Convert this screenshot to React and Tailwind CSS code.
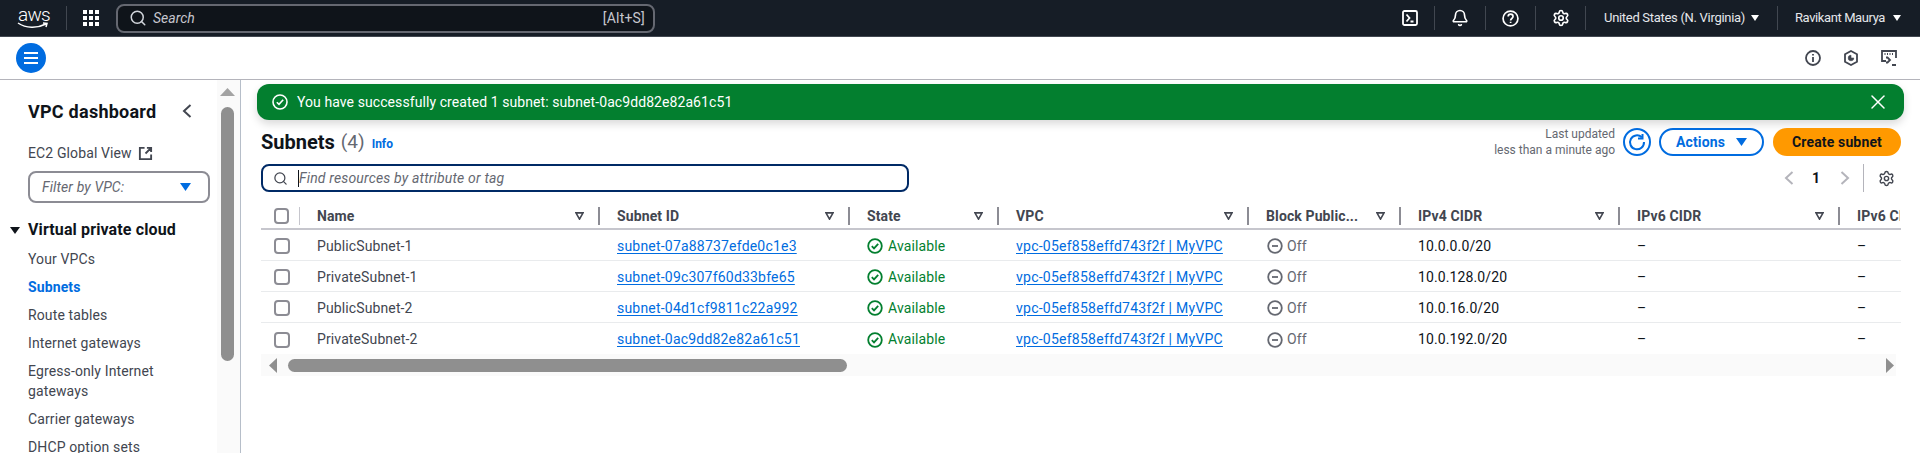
import { Search, Bell, Settings, X } from "lucide-react";

const FONT = "font-['Roboto','Liberation_Sans',sans-serif]";
const COLS = "grid grid-cols-[39px_300px_250px_149px_250px_152px_219px_220px_60px]";

const NAV = ["Your VPCs", "Subnets", "Route tables", "Internet gateways", "Egress-only Internet gateways", "Carrier gateways", "DHCP option sets"];

const ROWS = [
  { name: "PublicSubnet-1", id: "subnet-07a88737efde0c1e3", cidr: "10.0.0.0/20" },
  { name: "PrivateSubnet-1", id: "subnet-09c307f60d33bfe65", cidr: "10.0.128.0/20" },
  { name: "PublicSubnet-2", id: "subnet-04d1cf9811c22a992", cidr: "10.0.16.0/20" },
  { name: "PrivateSubnet-2", id: "subnet-0ac9dd82e82a61c51", cidr: "10.0.192.0/20" },
];

const HEADERS = ["Name", "Subnet ID", "State", "VPC", "Block Public...", "IPv4 CIDR", "IPv6 CIDR", "IPv6 CIDR"];

function Caret({ className }) {
  return (
    <svg viewBox="0 0 10 8" preserveAspectRatio="none" className={className} fill="currentColor">
      <path d="M0 0h10L5 8z" />
    </svg>
  );
}

function Chevron({ dir, className }) {
  return (
    <svg viewBox="0 0 10 14" className={`w-[10px] h-[14px] shrink-0 ${className}`} fill="none" stroke="currentColor" strokeWidth="2">
      <path d={dir === "left" ? "M8.5 1L2 7l6.5 6" : "M1.5 1L8 7l-6.5 6"} />
    </svg>
  );
}

function CheckCircle({ className }) {
  return (
    <svg viewBox="0 0 16 16" className={className} fill="none" stroke="currentColor" strokeWidth="1.8">
      <circle cx="8" cy="8" r="6.8" />
      <path d="M4.8 8.2l2.2 2.2 4.2-4.6" />
    </svg>
  );
}

function TopDivider() {
  return <div className="w-px h-6 bg-[#414750]" />;
}

function Waffle() {
  return (
    <div className="grid grid-cols-3 gap-[2px] w-[16px]">
      {[0, 1, 2, 3, 4, 5, 6, 7, 8].map((i) => (
        <div key={i} className="w-[4px] h-[4px] bg-white" />
      ))}
    </div>
  );
}

function TopBar() {
  return (
    <div className="h-[37px] bg-[#161d26] border-b border-[#414750] flex items-center text-white shrink-0">
      <div className="w-[66px] pl-[17px] flex flex-col items-start">
        <span className="text-[19px] leading-[13px] font-light tracking-[-0.8px] pl-[1px] pb-[1px]">aws</span>
        <svg viewBox="0 0 32 7" className="w-[32px] h-[7px]" fill="none" stroke="currentColor" strokeWidth="1.5">
          <path d="M1 1c8 5.5 19 5.5 28 1M26 1l4 .5-1 3.5" />
        </svg>
      </div>
      <TopDivider />
      <div className="ml-[16px] mr-[17px]">
        <Waffle />
      </div>
      <div className="w-[539px] h-[29px] rounded-lg border-2 border-[#656871] bg-[#0f141a] flex items-center pl-[11px] pr-[8px] text-[#c6c6cd]">
        <Search size={18} strokeWidth={2} className="text-[#d1d5db]" />
        <span className="ml-[6px] italic text-[14px] flex-1">Search</span>
        <span className="text-[14px] tracking-[0.2px]">[Alt+S]</span>
      </div>
      <div className="flex-1" />
      <svg viewBox="0 0 16 16" className="w-[16px] h-[16px]" fill="none" stroke="currentColor" strokeWidth="1.8">
        <rect x="1" y="1" width="14" height="14" rx="1.5" />
        <path d="M4.5 4.5L7.5 8l-3 3.5M8.5 11.5h3" />
      </svg>
      <div className="ml-[16px] mr-[16px]"><TopDivider /></div>
      <Bell size={18} strokeWidth={2.2} />
      <div className="ml-[16px] mr-[16px]"><TopDivider /></div>
      <svg viewBox="0 0 16 16" className="w-[17px] h-[17px]" fill="none" stroke="currentColor" strokeWidth="1.6">
        <circle cx="8" cy="8" r="7" />
        <path d="M5.8 6.2c0-3 4.6-3 4.6 0 0 1.8-2.3 1.8-2.3 3.6M8.1 11v1.2" />
      </svg>
      <div className="ml-[16px] mr-[16px]"><TopDivider /></div>
      <Settings size={18} strokeWidth={2.2} />
      <div className="ml-[15px] mr-[18px]"><TopDivider /></div>
      <span className="text-[13px] tracking-[-0.3px] text-[#e5e7eb] w-[141px] whitespace-nowrap">United States (N. Virginia)</span>
      <Caret className="w-[8px] h-[6px] ml-[6px]" />
      <div className="ml-[18px] mr-[17px]"><TopDivider /></div>
      <span className="text-[13px] tracking-[-0.4px] text-[#e5e7eb] w-[91px] whitespace-nowrap">Ravikant Maurya</span>
      <Caret className="w-[8px] h-[6px] ml-[7px] mr-[19px]" />
    </div>
  );
}

function SubBar() {
  return (
    <div className="h-[43px] bg-white border-b border-[#b4b4bb] flex items-center shrink-0 pl-[16px] pr-[23px]">
      <div className="w-[30px] h-[30px] rounded-full bg-[#006ce0] flex flex-col items-center justify-center gap-[3px]">
        <div className="w-[14px] h-[2px] bg-white" />
        <div className="w-[14px] h-[2px] bg-white" />
        <div className="w-[14px] h-[2px] bg-white" />
      </div>
      <div className="flex-1" />
      <div className="flex items-center gap-[22px] text-[#424650]">
        <svg viewBox="0 0 16 16" className="w-[16px] h-[16px]" fill="none" stroke="currentColor" strokeWidth="1.8">
          <circle cx="8" cy="8" r="7" />
          <path d="M8 7v5M8 4v1.6" />
        </svg>
        <svg viewBox="0 0 16 16" className="w-[16px] h-[16px]" fill="none" stroke="currentColor" strokeWidth="1.8">
          <path d="M8 1l6 3.2v7.6L8 15l-6-3.2V4.2z" />
          <path d="M8 5.2A2.8 2.8 0 1 0 10.8 8H8z" fill="currentColor" strokeWidth="0.6" />
        </svg>
        <svg viewBox="0 0 16 16" className="w-[16px] h-[16px]" fill="none" stroke="currentColor" strokeWidth="1.8">
          <path d="M5 11H1V1h14v7" />
          <path d="M3.5 4h1M6 4h1M8.5 4h1M11 4h1" />
          <path d="M5 7.5h1.5l2.5 2.5-2.5 2.5H5M11 15h4" />
        </svg>
      </div>
    </div>
  );
}

function Sidebar() {
  return (
    <div className="w-[241px] shrink-0 h-full border-r border-[#b6bec9] flex overflow-hidden">
      <div className="w-[217px] shrink-0 pt-[20px] text-[#424650] tracking-[0.12px]">
        <div className="pl-[28px] pr-[25px] h-[22px] flex items-center justify-between">
          <span className="text-[18px] font-bold text-[#0f141a] whitespace-nowrap tracking-[0.25px]">VPC dashboard</span>
          <Chevron dir="left" className="text-[#424650]" />
        </div>
        <div className="pl-[28px] mt-[21px] h-[20px] flex items-center gap-[6px] text-[14px]">
          <span>EC2 Global View</span>
          <svg viewBox="0 0 16 16" className="w-[15px] h-[15px]" fill="none" stroke="currentColor" strokeWidth="2">
            <path d="M7 2H2v12h12V9M9.5 2H14v4.5M14 2L8 8" />
          </svg>
        </div>
        <div className="ml-[28px] w-[182px] h-[32px] mt-[8px] rounded-lg border-2 border-[#8c8c94] flex items-center pl-[12px] pr-[17px] justify-between">
          <span className="text-[14px] italic text-[#656871]">Filter by VPC:</span>
          <Caret className="w-[11px] h-[8px] text-[#006ce0]" />
        </div>
        <div className="pl-[10px] mt-[16px] h-[22px] flex items-center">
          <Caret className="w-[10px] h-[7px] text-[#0f141a]" />
          <span className="ml-[8px] text-[16px] font-bold text-[#0f141a] whitespace-nowrap">Virtual private cloud</span>
        </div>
        <div className="pl-[28px] pr-[30px] mt-[8px] flex flex-col gap-[8px] text-[14px] leading-[20px]">
          {NAV.map((item) => (
            <div key={item} className={item === "Subnets" ? "text-[#006ce0] font-bold" : ""}>
              {item}
            </div>
          ))}
        </div>
      </div>
      <div className="w-[23px] bg-[#fafafa] flex flex-col items-center pt-[8px] pr-[3px]">
        <Caret className="w-[15px] h-[8px] rotate-180 text-[#a3a3a3]" />
        <div className="w-[13px] h-[254px] mt-[11px] rounded-full bg-[#8f8f8f]" />
      </div>
    </div>
  );
}

function Flash() {
  return (
    <div className="ml-[16px] mr-[16px] mt-[4px] h-[36px] rounded-[12px] bg-[#037f2f] shadow-[0_4px_8px_rgba(0,0,0,0.15)] flex items-center pl-[15px] pr-[14px] text-white shrink-0">
      <svg viewBox="0 0 16 16" className="w-[16px] h-[16px]" fill="none" stroke="currentColor" strokeWidth="1.6">
        <circle cx="8" cy="8" r="7" />
        <path d="M4.8 8.2l2.2 2.2 4.2-4.6" />
      </svg>
      <span className="ml-[9px] text-[14px] flex-1 whitespace-nowrap tracking-[0.08px]">You have successfully created 1 subnet: subnet-0ac9dd82e82a61c51</span>
      <X size={24} strokeWidth={1.5} />
    </div>
  );
}

function Header() {
  return (
    <div className="h-[28px] mt-[8px] flex items-center shrink-0">
      <span className="text-[20px] font-bold text-[#0f141a]">Subnets</span>
      <span className="ml-[6px] text-[19px] text-[#656871]">(4)</span>
      <span className="ml-[7px] text-[12px] font-bold text-[#006ce0] mt-[3px]">Info</span>
      <div className="flex-1" />
      <div className="text-right text-[12px] leading-[16px] text-[#656871]">
        <div>Last updated</div>
        <div>less than a minute ago</div>
      </div>
      <div className="ml-[8px] w-[28px] h-[28px] rounded-full border-2 border-[#006ce0] flex items-center justify-center text-[#006ce0]">
        <svg viewBox="0 0 18 18" className="w-[18px] h-[18px]" fill="none" stroke="currentColor" strokeWidth="2">
          <path d="M13.8 4.2A7 7 0 1 0 16 9" />
          <path d="M14.5 1v4.5H10" />
        </svg>
      </div>
      <div className="ml-[8px] w-[105px] h-[28px] rounded-full border-2 border-[#006ce0] flex items-center justify-center gap-[11px] text-[#006ce0]">
        <span className="text-[14px] font-bold tracking-[0.12px]">Actions</span>
        <Caret className="w-[11px] h-[8px]" />
      </div>
      <div className="ml-[9px] w-[128px] h-[28px] rounded-full bg-[#ff9900] flex items-center justify-center text-[14px] font-bold text-[#0f141a] tracking-[0.15px]">
        Create subnet
      </div>
    </div>
  );
}

function FilterRow() {
  return (
    <div className="h-[28px] mt-[8px] flex items-center shrink-0">
      <div className="w-[648px] h-[28px] rounded-lg border-2 border-[#002a66] flex items-center pl-[10px]">
        <Search size={15} strokeWidth={2} className="text-[#424650]" />
        <div className="ml-[10px] w-px h-[17px] bg-[#0f141a]" />
        <span className="text-[14px] italic text-[#656871] tracking-[0.17px]">Find resources by attribute or tag</span>
      </div>
      <div className="flex-1" />
      <Chevron dir="left" className="text-[#b4b4bb]" />
      <span className="ml-[18px] w-[10px] text-[14px] font-bold text-[#0f141a]">1</span>
      <Chevron dir="right" className="ml-[18px] text-[#b4b4bb]" />
      <div className="ml-[13px] w-px h-[28px] bg-[#b4b4bb]" />
      <Settings size={17} strokeWidth={2} className="ml-[14px] mr-[6px] text-[#424650]" />
    </div>
  );
}

function Checkbox() {
  return <div className="w-[16px] h-[16px] ml-[13px] rounded-[4px] border-2 border-[#8c8c94] bg-white" />;
}

function HeadCell({ label }) {
  return (
    <div className="flex items-center pl-[17px] overflow-hidden">
      <span className="text-[14px] font-bold text-[#424650] flex-1 whitespace-nowrap tracking-[0.12px]">{label}</span>
      <svg viewBox="0 0 10 9" className="w-[9px] h-[8px] mr-[14px] shrink-0 text-[#424650]" fill="none" stroke="currentColor" strokeWidth="1.8">
        <path d="M1 1h8L5 8z" />
      </svg>
      <div className="w-[2px] h-[18px] bg-[#8c8c94] shrink-0" />
    </div>
  );
}

function Table() {
  return (
    <div className="mt-[8px] overflow-hidden shrink-0">
      <div className={`${COLS} h-[30px] border-b-2 border-[#c6c6cd] pt-[6px] pb-[2px]`}>
        <div className="flex items-center">
          <Checkbox />
          <div className="ml-[10px] w-px h-[18px] bg-[#c6c6cd]" />
        </div>
        {HEADERS.map((h, i) => (
          <HeadCell key={i} label={h} />
        ))}
      </div>
      {ROWS.map((row, i) => (
        <div key={row.id} className={`${COLS} h-[31px] pt-[2px] items-center text-[14px] text-[#0f141a] tracking-[0.12px] ${i < 3 ? "border-b border-[#e9ebed]" : ""}`}>
          <div className="flex items-center">
            <Checkbox />
          </div>
          <div className="pl-[17px] text-[#424650]">{row.name}</div>
          <div className="pl-[17px]">
            <span className="text-[#006ce0] underline underline-offset-2 tracking-[0.2px]">{row.id}</span>
          </div>
          <div className="pl-[17px] flex items-center gap-[5px] text-[#037f2f]">
            <CheckCircle className="w-[16px] h-[16px]" />
            <span>Available</span>
          </div>
          <div className="pl-[17px] whitespace-nowrap">
            <span className="text-[#006ce0] underline underline-offset-2 tracking-[0.25px]">vpc-05ef858effd743f2f | MyVPC</span>
          </div>
          <div className="pl-[18px] flex items-center gap-[4px] text-[#656871]">
            <svg viewBox="0 0 16 16" className="w-[16px] h-[16px]" fill="none" stroke="currentColor" strokeWidth="1.8">
              <circle cx="8" cy="8" r="6.8" />
              <path d="M5 8h6" />
            </svg>
            <span>Off</span>
          </div>
          <div className="pl-[17px]">{row.cidr}</div>
          <div className="pl-[17px]">–</div>
          <div className="pl-[17px]">–</div>
        </div>
      ))}
      <div className="h-[22px] mr-[5px] bg-[#fafafa] flex items-center">
        <svg viewBox="0 0 8 15" preserveAspectRatio="none" className="w-[8px] h-[15px] ml-[8px] text-[#8f8f8f]" fill="currentColor">
          <path d="M8 0v15L0 7.5z" />
        </svg>
        <div className="ml-[11px] w-[559px] h-[13px] rounded-full bg-[#8f8f8f]" />
        <div className="flex-1" />
        <svg viewBox="0 0 8 15" preserveAspectRatio="none" className="w-[8px] h-[15px] mr-[2px] text-[#8f8f8f]" fill="currentColor">
          <path d="M0 0v15l8-7.5z" />
        </svg>
      </div>
    </div>
  );
}

export default function App() {
  return (
    <div className={`${FONT} w-[1920px] h-[453px] overflow-hidden flex flex-col bg-white`}>
      <TopBar />
      <SubBar />
      <div className="flex flex-1 min-h-0">
        <Sidebar />
        <div className="flex-1 min-w-0 flex flex-col">
          <Flash />
          <div className="pl-[20px] pr-[19px] flex flex-col">
            <Header />
            <FilterRow />
            <Table />
          </div>
        </div>
      </div>
    </div>
  );
}
